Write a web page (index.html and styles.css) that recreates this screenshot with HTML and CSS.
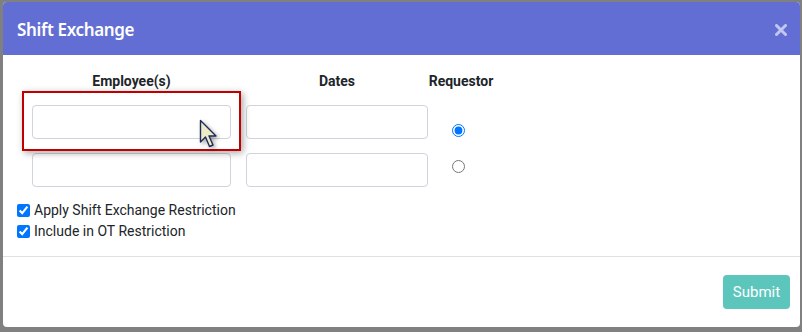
FILE: index.html
```html
<!DOCTYPE html>
<html>
<head>
<meta charset="utf-8">
<link rel="stylesheet" href="styles.css">
</head>
<body>
<div class="modal">
  <div class="modal-header">
    <h1 class="modal-title">Shift Exchange</h1>
    <svg class="close" width="12" height="12" viewBox="0 0 12 12"><path d="M1.5 1.5 L10.5 10.5 M10.5 1.5 L1.5 10.5" stroke="#c3c7ef" stroke-width="3" stroke-linecap="round"/></svg>
  </div>
  <div class="modal-body">
    <div class="grid">
      <div class="col-label">Employee(s)</div>
      <div class="col-label">Dates</div>
      <div class="col-label req">Requestor</div>
      <div class="field"><input class="input" type="text"></div>
      <div class="field"><input class="input" type="text"></div>
      <div class="radio-cell req r1"><input type="radio" name="req" checked></div>
      <div class="field"><input class="input" type="text"></div>
      <div class="field"><input class="input" type="text"></div>
      <div class="radio-cell req r2"><input type="radio" name="req"></div>
    </div>
    <div class="checks">
      <label class="check"><input type="checkbox" checked> Apply Shift Exchange Restriction</label>
      <label class="check"><input type="checkbox" checked> Include in OT Restriction</label>
    </div>
    <div class="highlight"></div>
    <svg class="cursor" width="22" height="32" viewBox="0 0 22 32"><path d="M1.5 1.5 L1.5 23 L6.5 18 L10.5 27.5 L14 26 L10 17 L17 17 Z" fill="#ecebc6" stroke="#1f2a5c" stroke-width="1.4" stroke-linejoin="round"/></svg>
  </div>
  <div class="modal-footer">
    <button class="btn-submit">Submit</button>
  </div>
</div>
</body>
</html>
```
FILE: styles.css
```css
html, body {
  margin: 0;
  padding: 0;
  background: #808080;
  width: 802px;
  height: 332px;
  overflow: hidden;
}
.modal {
  margin: 2px 0 0 3px;
  width: 797px;
  height: 325px;
  background: #fff;
  border-radius: 4px;
  overflow: hidden;
  font-family: Roboto, "Liberation Sans", sans-serif;
  color: #212529;
}
.modal-header {
  height: 53px;
  background: #636ed4;
  display: flex;
  align-items: center;
  justify-content: space-between;
  padding: 0 13px 0 14px;
}
.modal-title {
  margin: 0;
  font-family: "Noto Sans", "Open Sans", sans-serif;
  font-weight: 600;
  font-size: 17px;
  letter-spacing: -0.35px;
  color: #fff;
  padding-top: 1px;
}
.close {
  margin-top: 2px;
}
.modal-body {
  position: relative;
  height: 201px;
  border-bottom: 1px solid #dee2e6;
}
.grid {
  display: grid;
  grid-template-columns: 199px 182px 66px;
  column-gap: 15px;
  padding: 18px 0 0 29px;
  row-gap: 14px;
}
.col-label {
  font-weight: 700;
  font-size: 14px;
  text-align: center;
  line-height: 17px;
  color: #212529;
  margin-bottom: 1px;
}
.req {
  margin-left: -15px;
  margin-right: 15px;
}
.input {
  box-sizing: border-box;
  width: 100%;
  height: 34px;
  border: 1px solid #ced4da;
  border-radius: 4px;
  display: block;
  margin: 0;
  background: #fff;
}
.radio-cell {
  display: flex;
  justify-content: center;
  padding-right: 6px;
}
.radio-cell input {
  margin: 0;
  width: 13px;
  height: 13px;
}
.r1 { padding-top: 19px; }
.r2 { padding-top: 7px; }
.checks {
  display: flex;
  flex-direction: column;
  padding: 17px 0 0 14px;
  gap: 8px;
}
.check {
  font-size: 14px;
  line-height: 13px;
  display: flex;
  align-items: center;
  gap: 4px;
  color: #212529;
}
.check input {
  margin: 0;
  width: 13px;
  height: 13px;
}
.highlight {
  position: absolute;
  left: 19px;
  top: 36px;
  width: 215px;
  height: 56px;
  border: 2px solid #c00000;
  box-shadow: 2px 2px 7px rgba(0,0,0,0.35);
}
.cursor {
  position: absolute;
  left: 196px;
  top: 64px;
  filter: drop-shadow(2px 2px 2px rgba(0,0,0,0.35));
}
.modal-footer {
  display: flex;
  justify-content: flex-end;
  padding: 18px 10px 0 0;
}
.btn-submit {
  width: 67px;
  height: 34px;
  background: #5cc6bd;
  border: none;
  border-radius: 4px;
  color: #fff;
  font-family: Roboto, "Liberation Sans", sans-serif;
  font-size: 15px;
  padding: 0;
}
```
